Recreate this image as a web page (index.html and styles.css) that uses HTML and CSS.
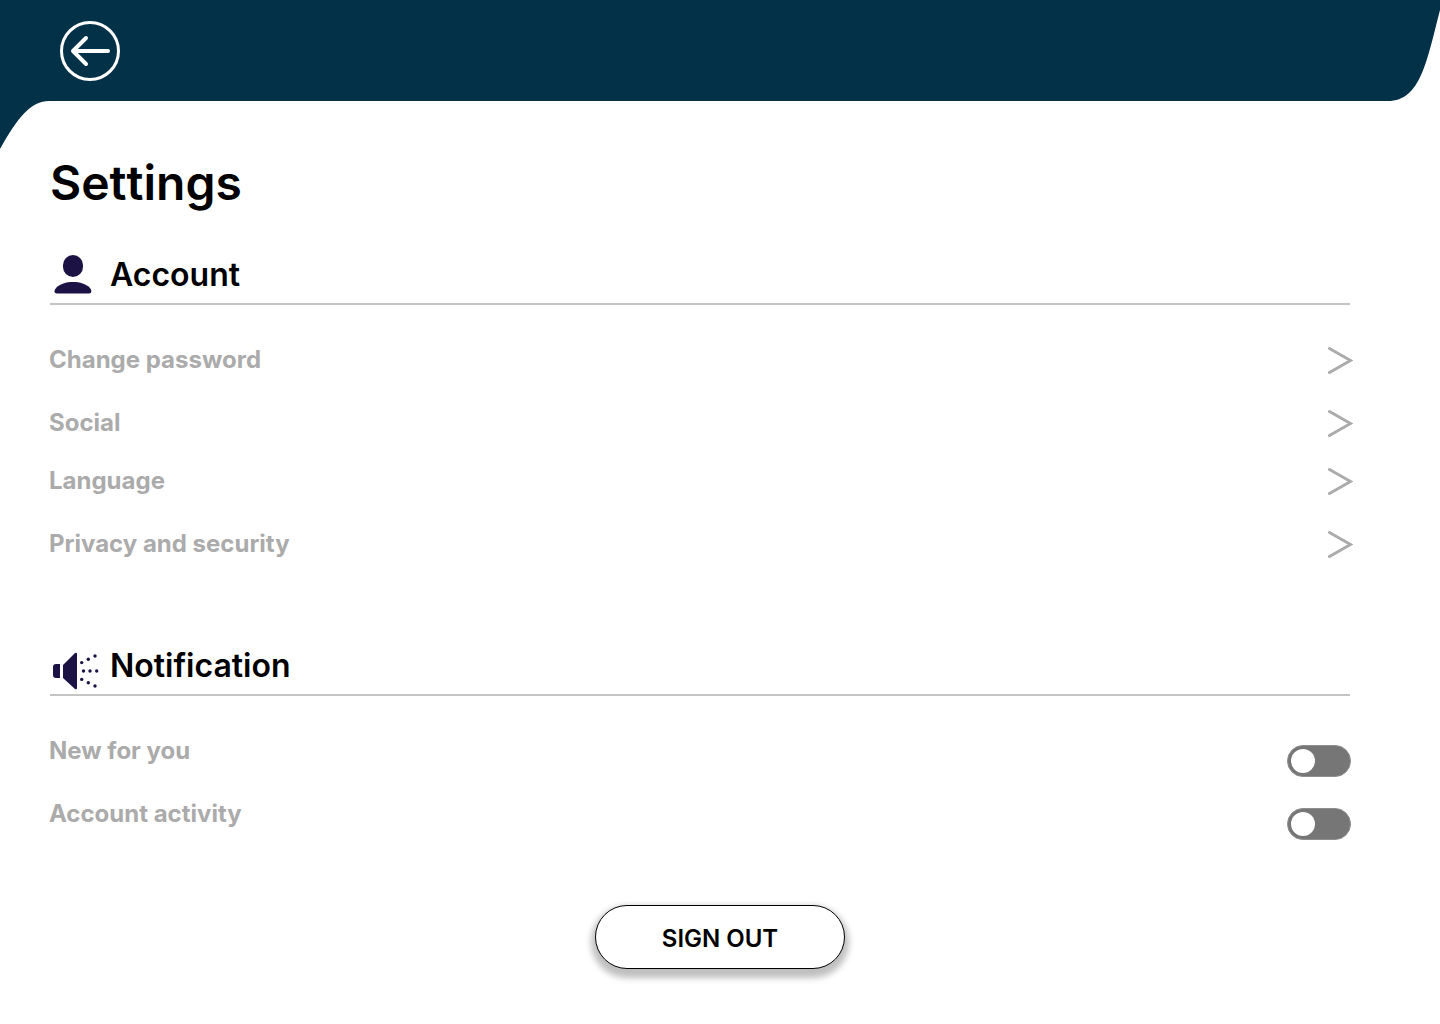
FILE: index.html
```html
<!DOCTYPE html>
<html lang="en">
<head>
<meta charset="utf-8">
<meta name="viewport" content="width=device-width, initial-scale=1">
<title>Settings</title>
<link rel="stylesheet" href="styles.css">
</head>
<body>
<header class="banner">
  <svg class="corner-left" viewBox="0 0 52 149" aria-hidden="true"><path d="M0 0H52V101H49C31 101 18 117 0 149Z"/></svg>
  <div class="bar">
    <button class="back" type="button" aria-label="Back">
      <svg viewBox="0 0 60 60" aria-hidden="true"><circle cx="30" cy="30" r="28.5" stroke-width="3"/><path d="M48 30H13M26 17L13 30L26 43" stroke-width="4"/></svg>
    </button>
  </div>
  <svg class="corner-right" viewBox="0 0 56 101" aria-hidden="true"><path d="M0 0H56V10C43 60 37 101 4 101H0Z"/></svg>
</header>
<main class="page">
  <h1 class="title">Settings</h1>

  <section class="section">
    <div class="section-head">
      <svg class="icon" viewBox="0 -1 50 50" aria-hidden="true"><rect x="13" y="1" width="20" height="22" rx="10"/><path d="M7 39.500C3.500 39.500 4 36 6.500 33.500C10 30 16 28 23 28S36 30 39.500 33.500C42 36 42 39.500 39 39.500Z"/></svg>
      <h2 class="heading">Account</h2>
    </div>
    <nav class="links">
      <div class="group">
        <a class="link" href="#password">Change password<svg class="chevron" viewBox="0 0 25 28" aria-hidden="true"><path d="M1.500 2.500L22.500 14.500L1.500 26.500"/></svg></a>
        <a class="link" href="#social">Social<svg class="chevron" viewBox="0 0 25 28" aria-hidden="true"><path d="M1.500 2.500L22.500 14.500L1.500 26.500"/></svg></a>
      </div>
      <div class="group">
        <a class="link" href="#language">Language<svg class="chevron" viewBox="0 0 25 28" aria-hidden="true"><path d="M1.500 2.500L22.500 14.500L1.500 26.500"/></svg></a>
        <a class="link" href="#privacy">Privacy and security<svg class="chevron" viewBox="0 0 25 28" aria-hidden="true"><path d="M1.500 2.500L22.500 14.500L1.500 26.500"/></svg></a>
      </div>
    </nav>
  </section>

  <section class="section">
    <div class="section-head">
      <svg class="icon" viewBox="0 -8 50 50" aria-hidden="true"><path d="M6 12H10V26H6Q3 26 3 23V15Q3 12 6 12ZM13 13L25 1Q27 0 27 2V36Q27 38 25 37L13 26Z"/><g><circle cx="31.700" cy="10.600" r="1.700"/><circle cx="38.300" cy="7.300" r="1.700"/><circle cx="45" cy="4" r="1.700"/><circle cx="33.500" cy="19" r="1.700"/><circle cx="40" cy="19" r="1.700"/><circle cx="46.700" cy="19" r="1.700"/><circle cx="31.700" cy="27.400" r="1.700"/><circle cx="38.300" cy="30.700" r="1.700"/><circle cx="45" cy="34" r="1.700"/></g></svg>
      <h2 class="heading">Notification</h2>
    </div>
    <div class="switches">
      <div class="switch-row"><label for="new">New for you</label><input class="switch" type="checkbox" role="switch" id="new"></div>
      <div class="switch-row"><label for="activity">Account activity</label><input class="switch" type="checkbox" role="switch" id="activity"></div>
    </div>
  </section>

  <button class="sign-out" type="button">SIGN OUT</button>
</main>
</body>
</html>
```
FILE: styles.css
```css
* { box-sizing: border-box; }
body { margin: 0; background: #fff; color: #000; font-family: Inter, sans-serif; }
svg { display: block; flex: none; }

.banner { display: flex; align-items: flex-start; }
.corner-left { width: 52px; height: 149px; fill: #033147; }
.corner-right { width: 56px; height: 101px; fill: #033147; }
.bar { flex: 1; height: 101px; padding: 21px 8px; background: #033147; }
.back { display: block; width: 60px; height: 60px; padding: 0; border: 0; background: none; cursor: pointer; }
.back svg { fill: none; stroke: #fff; stroke-linecap: round; stroke-linejoin: round; }

.page { display: flex; flex-direction: column; padding: 5px 90px 48px 50px; }
.title { margin: 0 0 41px; font-size: 48px; line-height: 58px; font-weight: 600; font-kerning: none; }

.section { margin-bottom: 86px; }
.section:last-of-type { margin-bottom: 65px; }
.section-head { display: flex; align-items: flex-end; gap: 10px; height: 52px; border-bottom: 2px solid #c4c4c4; }
.icon { width: 50px; height: 50px; fill: #1c1344; }
.heading { margin: 0 0 8px; font-size: 32px; line-height: 40px; font-weight: 600; }

.links, .switches, .group { display: flex; flex-direction: column; }
.links { gap: 29px; padding-top: 40px; margin: 0 -3px 0 -1px; }
.group { gap: 34px; }
.link { display: flex; align-items: center; justify-content: space-between; color: #ababab; font-size: 24px; line-height: 29px; font-weight: 700; text-decoration: none; }
.chevron { width: 25px; height: 28px; fill: none; stroke: #ababab; stroke-width: 3; stroke-linecap: round; }

.switches { gap: 22px; padding-top: 40px; margin: 0 -1px; }
.switch-row { display: flex; justify-content: space-between; height: 41px; color: #ababab; font-size: 24px; line-height: 29px; font-weight: 700; }
.switch { appearance: none; align-self: flex-end; width: 64px; height: 32px; margin: 0; padding: 3px; border: 1px solid #8e8e8e; border-radius: 16px; background: #767676; cursor: pointer; }
.switch::before { content: ""; display: block; width: 24px; height: 24px; border-radius: 50%; background: #fff; }
.switch:checked::before { margin-left: auto; }

.sign-out { align-self: center; width: 250px; height: 64px; margin-left: 40px; padding: 2px 0 0; border: 1px solid #000; border-radius: 32px; background: #fff; box-shadow: 0 5px 6px 4px rgba(0, 0, 0, 0.25); color: #000; font: 600 24px/29px Inter, sans-serif; cursor: pointer; }
```
